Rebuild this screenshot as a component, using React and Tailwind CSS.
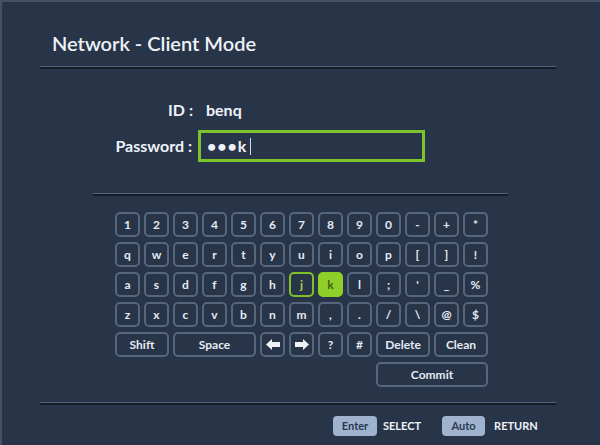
import React from "react";

const rows = [
  ["1", "2", "3", "4", "5", "6", "7", "8", "9", "0", "-", "+", "*"],
  ["q", "w", "e", "r", "t", "y", "u", "i", "o", "p", "[", "]", "!"],
  ["a", "s", "d", "f", "g", "h", "j", "k", "l", ";", "'", "_", "%"],
  ["z", "x", "c", "v", "b", "n", "m", ",", ".", "/", "\\", "@", "$"],
];

function Key({ children, span = 1, variant = "normal" }) {
  const spanCls =
    span === 2 ? "col-span-2" : span === 3 ? "col-span-3" : span === 4 ? "col-span-4" : "";
  const base =
    "h-[25px] rounded-[5px] border-2 flex items-center justify-center text-[12px] font-bold leading-none";
  const look =
    variant === "active"
      ? "bg-[#8fcf2a] border-[#8fcf2a] text-[#3d6410]"
      : variant === "focus"
      ? "border-[#7ec12a] text-[#a9d84a]"
      : "border-[#56667d] text-[#e4eaf2]";
  return <div className={`${base} ${look} ${spanCls}`}>{children}</div>;
}

function Arrow({ dir }) {
  return (
    <svg width="14" height="11" viewBox="0 0 14 11">
      {dir === "left" ? (
        <path d="M0 5.5 L6 0 V3 H14 V8 H6 V11 Z" fill="#eef2f7" />
      ) : (
        <path d="M14 5.5 L8 0 V3 H0 V8 H8 V11 Z" fill="#eef2f7" />
      )}
    </svg>
  );
}

function Line({ cls }) {
  return (
    <div className={`${cls} h-[3px] border-t border-[#56647a] bg-[#151c27]`} />
  );
}

export default function App() {
  return (
    <div
      className="w-[600px] h-[445px] bg-[#283549] border-t-2 border-l-2 border-[#465164] flex flex-col overflow-hidden"
      style={{ fontFamily: "Lato, 'Open Sans', sans-serif" }}
    >
      <div className="ml-[50px] mt-[29px] text-[20px] leading-[24px] font-semibold text-[#eef2f7]">
        Network - Client Mode
      </div>
      <Line cls="ml-[38px] w-[516px] mt-[11px]" />

      <div className="mt-[31px] flex items-center h-[20px]">
        <div className="w-[191px] text-right text-[16px] font-bold text-[#eef2f7]">ID :</div>
        <div className="ml-[13px] text-[16px] font-bold text-[#eef2f7]">benq</div>
      </div>

      <div className="mt-[10px] flex items-center">
        <div className="w-[190px] text-right text-[16px] font-bold text-[#eef2f7]">Password :</div>
        <div className="ml-[6px] w-[227px] h-[32px] border-[3px] border-[#7cc42b] flex items-center pl-[6px] text-[16px] font-bold text-[#eef2f7]">
          <span className="tracking-[1px]">•••k</span>
          <span className="ml-[3px] w-[1px] h-[17px] bg-[#cfd6df]" />
        </div>
      </div>

      <Line cls="ml-[91px] w-[415px] mt-[31px]" />

      <div className="ml-[113px] mt-[16px] grid grid-cols-[repeat(13,25px)] gap-x-[4px] gap-y-[5px]">
        {rows.map((r, ri) =>
          r.map((k, ki) => (
            <Key
              key={`${ri}-${ki}`}
              variant={k === "k" ? "active" : k === "j" ? "focus" : "normal"}
            >
              {k}
            </Key>
          ))
        )}
        <Key span={2}>Shift</Key>
        <Key span={3}>Space</Key>
        <Key>
          <Arrow dir="left" />
        </Key>
        <Key>
          <Arrow dir="right" />
        </Key>
        <Key>?</Key>
        <Key>#</Key>
        <Key span={2}>Delete</Key>
        <Key span={2}>Clean</Key>
        <div className="col-span-9" />
        <Key span={4}>Commit</Key>
      </div>

      <Line cls="ml-[38px] w-[516px] mt-[15px]" />

      <div className="mt-[11px] flex items-center h-[20px]">
        <div className="ml-[331px] w-[44px] h-[20px] rounded-[4px] bg-[#9fb3cf] flex items-center justify-center text-[11px] font-bold text-[#2b3a52]">
          Enter
        </div>
        <div className="ml-[6px] text-[11px] font-bold text-[#eef2f7]">SELECT</div>
        <div className="ml-[21px] w-[43px] h-[20px] rounded-[4px] bg-[#9fb3cf] flex items-center justify-center text-[11px] font-bold text-[#2b3a52]">
          Auto
        </div>
        <div className="ml-[9px] text-[11px] font-bold text-[#eef2f7]">RETURN</div>
      </div>
    </div>
  );
}
